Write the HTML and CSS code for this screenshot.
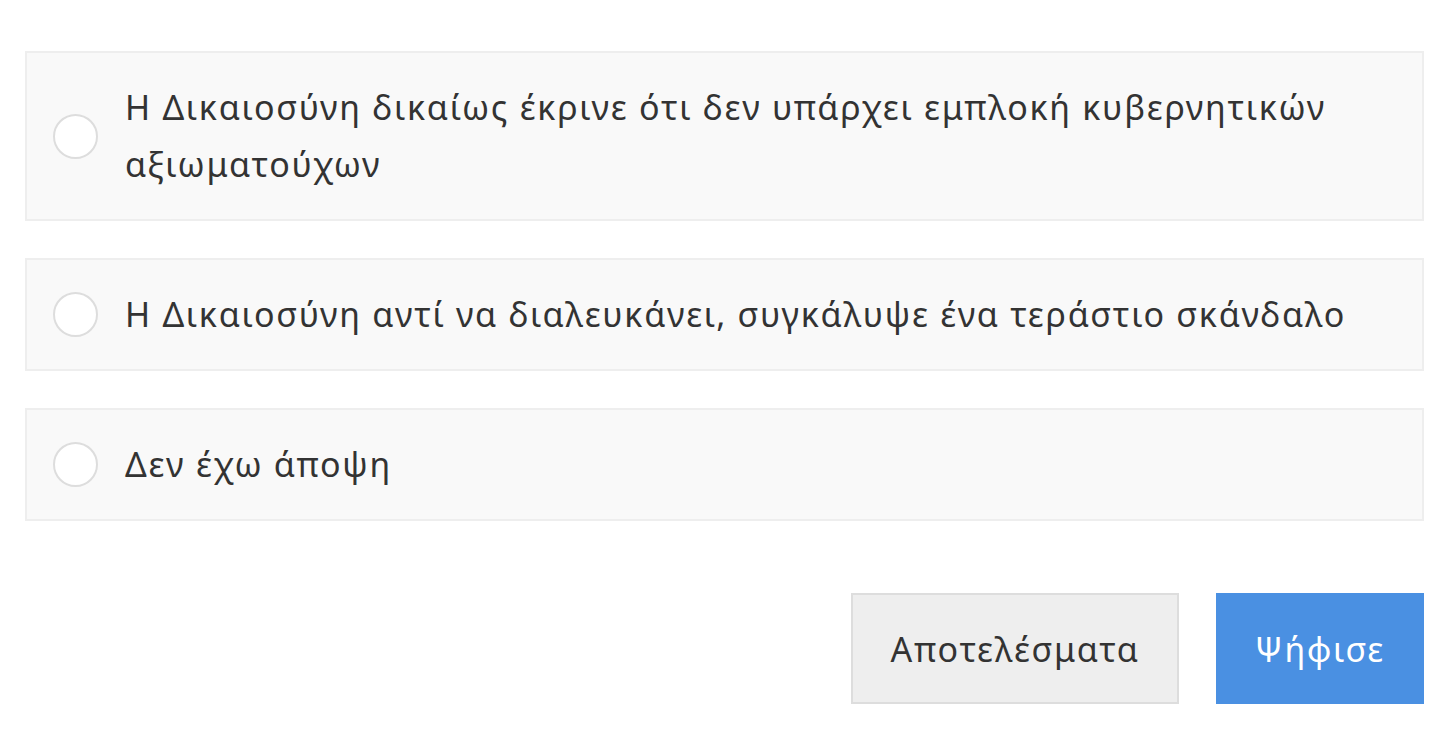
FILE: index.html
```html
<!DOCTYPE html>
<html lang="el">
<head>
    <meta charset="UTF-8">
    <meta name="viewport" content="width=device-width, initial-scale=1.0">
    <title>Δημοσκόπηση</title>
    <link rel="stylesheet" href="styles.css">
</head>
<body>
    <form class="poll">
        <label class="option">
            <input type="radio" name="answer" value="1">
            <span class="radio"></span>
            <span class="option-text">Η Δικαιοσύνη δικαίως έκρινε ότι δεν υπάρχει εμπλοκή κυβερνητικών αξιωματούχων</span>
        </label>
        <label class="option">
            <input type="radio" name="answer" value="2">
            <span class="radio"></span>
            <span class="option-text">Η Δικαιοσύνη αντί να διαλευκάνει, συγκάλυψε ένα τεράστιο σκάνδαλο</span>
        </label>
        <label class="option">
            <input type="radio" name="answer" value="3">
            <span class="radio"></span>
            <span class="option-text">Δεν έχω άποψη</span>
        </label>
        <div class="actions">
            <button type="button" class="btn btn-results">Αποτελέσματα</button>
            <button type="submit" class="btn btn-vote">Ψήφισε</button>
        </div>
    </form>
</body>
</html>
```

FILE: styles.css
```css
* {
    box-sizing: border-box;
    font-family: 'Noto Sans', 'Open Sans', sans-serif;
}

body {
    margin: 0;
    background: #ffffff;
    color: #333333;
}

.poll {
    padding: 51px 28px 0 25px;
    display: flex;
    flex-direction: column;
    gap: 37px;
}

.option {
    display: flex;
    align-items: center;
    gap: 27px;
    padding: 26px 20px 26px 26px;
    background: #f9f9f9;
    border: 2px solid #eeeeee;
    cursor: pointer;
}

.option input {
    display: none;
}

.radio {
    flex: none;
    width: 45px;
    height: 45px;
    border-radius: 50%;
    background: #ffffff;
    border: 2px solid #dddddd;
}

.option-text {
    font-size: 34px;
    line-height: 57px;
    letter-spacing: 1.7px;
}

.actions {
    display: flex;
    justify-content: flex-end;
    gap: 37px;
    padding-top: 35px;
}

.btn {
    height: 111px;
    padding: 0 37px;
    font-size: 34px;
    letter-spacing: 1.7px;
    border: 2px solid #dddddd;
    cursor: pointer;
}

.btn-results {
    background: #eeeeee;
    color: #333333;
}

.btn-vote {
    background: #4a90e2;
    border-color: #4a90e2;
    color: #ffffff;
}
```
